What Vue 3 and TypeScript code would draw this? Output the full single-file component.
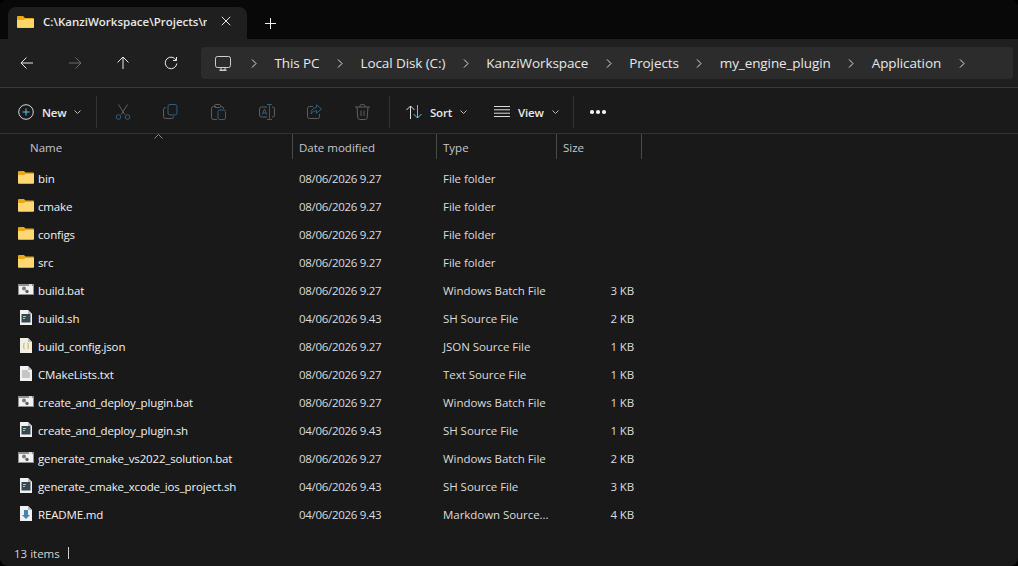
<script setup lang="ts">
type Kind = "folder" | "bat" | "sh" | "json" | "txt" | "md";

interface Row {
  name: string;
  date: string;
  type: string;
  size: string;
  kind: Kind;
}

const crumbs = ["This PC", "Local Disk (C:)", "KanziWorkspace", "Projects", "my_engine_plugin", "Application"];

const rows: Row[] = [
  { name: "bin", date: "08/06/2026 9.27", type: "File folder", size: "", kind: "folder" },
  { name: "cmake", date: "08/06/2026 9.27", type: "File folder", size: "", kind: "folder" },
  { name: "configs", date: "08/06/2026 9.27", type: "File folder", size: "", kind: "folder" },
  { name: "src", date: "08/06/2026 9.27", type: "File folder", size: "", kind: "folder" },
  { name: "build.bat", date: "08/06/2026 9.27", type: "Windows Batch File", size: "3 KB", kind: "bat" },
  { name: "build.sh", date: "04/06/2026 9.43", type: "SH Source File", size: "2 KB", kind: "sh" },
  { name: "build_config.json", date: "08/06/2026 9.27", type: "JSON Source File", size: "1 KB", kind: "json" },
  { name: "CMakeLists.txt", date: "08/06/2026 9.27", type: "Text Source File", size: "1 KB", kind: "txt" },
  { name: "create_and_deploy_plugin.bat", date: "08/06/2026 9.27", type: "Windows Batch File", size: "1 KB", kind: "bat" },
  { name: "create_and_deploy_plugin.sh", date: "04/06/2026 9.43", type: "SH Source File", size: "1 KB", kind: "sh" },
  { name: "generate_cmake_vs2022_solution.bat", date: "08/06/2026 9.27", type: "Windows Batch File", size: "2 KB", kind: "bat" },
  { name: "generate_cmake_xcode_ios_project.sh", date: "04/06/2026 9.43", type: "SH Source File", size: "3 KB", kind: "sh" },
  { name: "README.md", date: "04/06/2026 9.43", type: "Markdown Source...", size: "4 KB", kind: "md" },
];
</script>

<template>
  <div class="window">
    <!-- tab strip -->
    <div class="tabbar">
      <div class="tab">
        <svg class="tab-folder" width="17" height="14" viewBox="0 0 17 14">
          <path d="M0 2a1 1 0 0 1 1-1h5l2 2h8a1 1 0 0 1 1 1v8a1 1 0 0 1-1 1H1a1 1 0 0 1-1-1z" fill="#eaa917" />
          <path d="M0 5h6.500l1.500-1h9v8a1 1 0 0 1-1 .8H1a1 1 0 0 1-1-1z" fill="#fcd768" />
        </svg>
        <span class="tab-title">C:\KanziWorkspace\Projects\my_engine_plugin\Application</span>
        <svg class="tab-close" width="10" height="10" viewBox="0 0 10 10">
          <path d="M.8.8l8.400 8.400M9.200.8L.8 9.200" stroke="#e6e6e6" stroke-width="1" fill="none" />
        </svg>
      </div>
      <svg class="tab-plus" width="11" height="11" viewBox="0 0 11 11">
        <path d="M5.500 0v11M0 5.500h11" stroke="#f0f0f0" stroke-width="1" fill="none" />
      </svg>
    </div>

    <!-- back / forward / up / refresh + breadcrumb -->
    <div class="navbar">
      <div class="nav-buttons">
        <button class="nav-btn">
          <svg width="14" height="14" viewBox="0 0 14 14"><path d="M13 7H1M6.500 1.500L1 7l5.500 5.500" stroke="#e8e8e8" fill="none" /></svg>
        </button>
        <button class="nav-btn">
          <svg width="14" height="14" viewBox="0 0 14 14"><path d="M1 7h12M7.500 1.500L13 7l-5.500 5.500" stroke="#6b6b6b" fill="none" /></svg>
        </button>
        <button class="nav-btn">
          <svg width="14" height="14" viewBox="0 0 14 14"><path d="M7 13V1M1.500 6.500L7 1l5.500 5.500" stroke="#e8e8e8" fill="none" /></svg>
        </button>
        <button class="nav-btn">
          <svg width="14" height="14" viewBox="0 0 14 14"><path d="M12.500 1v3.500H9M12.300 4.500A5.800 5.800 0 1 0 12.800 7.500" stroke="#e8e8e8" fill="none" /></svg>
        </button>
      </div>
      <div class="address">
        <svg class="pc-icon" width="16" height="15" viewBox="0 0 16 15">
          <rect x=".5" y=".5" width="15" height="11" rx="2" stroke="#cfcfcf" fill="none" />
          <path d="M4.500 14.300h7" stroke="#cfcfcf" stroke-width="1.400" fill="none" />
          <path d="M6 12v2M10 12v2" stroke="#cfcfcf" fill="none" />
        </svg>
        <svg class="chev" width="6" height="9" viewBox="0 0 6 9"><path d="M1 .5l4 4-4 4" stroke="#e0e0e0" fill="none" /></svg>
        <template v-for="c in crumbs" :key="c">
          <span class="crumb">{{ c }}</span>
          <svg class="chev" width="6" height="9" viewBox="0 0 6 9"><path d="M1 .5l4 4-4 4" stroke="#e0e0e0" fill="none" /></svg>
        </template>
      </div>
    </div>

    <!-- command bar -->
    <div class="toolbar">
      <div class="tool-text new-btn">
        <svg width="16" height="16" viewBox="0 0 16 16">
          <circle cx="8" cy="8" r="7.300" stroke="#d8d8d8" fill="none" />
          <path d="M8 4.500v7M4.500 8h7" stroke="#5fc1f2" fill="none" />
        </svg>
        <span class="tool-label">New</span>
        <svg class="caret" width="7" height="4" viewBox="0 0 7 4"><path d="M.5.500l3 3 3-3" stroke="#bdbdbd" fill="none" /></svg>
      </div>
      <div class="sep"></div>
      <div class="icon-group">
        <div class="tool-icon">
          <svg width="16" height="16" viewBox="0 0 16 16" fill="none">
            <path d="M3.500 .5l6.300 10M12.500 .5L6.200 10.500" stroke="#5f5f5f" />
            <circle cx="3.500" cy="13" r="2.300" stroke="#2f5f7e" />
            <circle cx="12.500" cy="13" r="2.300" stroke="#2f5f7e" />
          </svg>
        </div>
        <div class="tool-icon">
          <svg width="15" height="15" viewBox="0 0 15 15" fill="none">
            <path d="M3 3.500H2.500a2 2 0 0 0-2 2v7a2 2 0 0 0 2 2h6a2 2 0 0 0 2-2" stroke="#5f5f5f" />
            <rect x="5" y=".5" width="9" height="10.500" rx="2" stroke="#2f5f7e" />
          </svg>
        </div>
        <div class="tool-icon">
          <svg width="15" height="16" viewBox="0 0 15 16" fill="none">
            <path d="M5 2.500H2.500a2 2 0 0 0-2 2v9a2 2 0 0 0 2 2H6M9 2.500h1.500a2 2 0 0 1 2 2V5" stroke="#5f5f5f" />
            <rect x="3.500" y=".5" width="6" height="3" rx="1" stroke="#5f5f5f" />
            <rect x="7" y="6" width="7.500" height="9.500" rx="1.500" stroke="#2f5f7e" />
          </svg>
        </div>
        <div class="tool-icon">
          <svg width="16" height="16" viewBox="0 0 16 16" fill="none">
            <path d="M8 3H2.500a2 2 0 0 0-2 2v6a2 2 0 0 0 2 2H8M13 3h.5a2 2 0 0 1 2 2v6a2 2 0 0 1-2 2H13" stroke="#5f5f5f" />
            <path d="M8 .5h5M8 15.500h5M10.500 .5v15" stroke="#2f5f7e" />
            <path d="M3.300 10.500L5.500 5l2.200 5.500M4 9h3" stroke="#2f5f7e" />
          </svg>
        </div>
        <div class="tool-icon">
          <svg width="15" height="15" viewBox="0 0 15 15" fill="none">
            <path d="M6 2.500H2.500a2 2 0 0 0-2 2v8a2 2 0 0 0 2 2h8a2 2 0 0 0 2-2V10" stroke="#5f5f5f" />
            <path d="M9.500 .8l5 4.200-5 4.200V6.700C7 6.700 5.200 7.800 4 10c0-3.800 2-6.200 5.500-6.500z" stroke="#2f5f7e" />
          </svg>
        </div>
        <div class="tool-icon">
          <svg width="15" height="16" viewBox="0 0 15 16" fill="none" stroke="#5f5f5f">
            <path d="M0 3h15M5 3V2a1.500 1.500 0 0 1 1.500-1.500h2A1.500 1.500 0 0 1 10 2v1M2 3l.8 10.500a2 2 0 0 0 2 2h5.400a2 2 0 0 0 2-2L13 3M6 6.500v5.500M9 6.500v5.500" />
          </svg>
        </div>
      </div>
      <div class="sep"></div>
      <div class="tool-text sort-btn">
        <svg width="16" height="14" viewBox="0 0 16 14" fill="none">
          <path d="M4.500 14V1M.5 5l4-4 4 4" stroke="#e0e0e0" />
          <path d="M11.500 0v13M7.500 9l4 4 4-4" stroke="#5fc1f2" />
        </svg>
        <span class="tool-label">Sort</span>
        <svg class="caret" width="7" height="4" viewBox="0 0 7 4"><path d="M.5.500l3 3 3-3" stroke="#bdbdbd" fill="none" /></svg>
      </div>
      <div class="tool-text view-btn">
        <svg width="16" height="11" viewBox="0 0 16 11" fill="none" stroke="#dcdcdc">
          <path d="M0 .5h16M0 3.800h16M0 7.200h16M0 10.500h16" />
        </svg>
        <span class="tool-label">View</span>
        <svg class="caret" width="7" height="4" viewBox="0 0 7 4"><path d="M.5.500l3 3 3-3" stroke="#bdbdbd" fill="none" /></svg>
      </div>
      <div class="sep"></div>
      <div class="more">
        <i></i><i></i><i></i>
      </div>
    </div>

    <!-- column headers -->
    <div class="header">
      <svg class="sort-arrow" width="9" height="5" viewBox="0 0 9 5"><path d="M.5 4.500l4-4 4 4" stroke="#8a8a8a" fill="none" /></svg>
      <div class="col col-name head">Name</div>
      <div class="col col-date head">Date modified</div>
      <div class="col col-type head">Type</div>
      <div class="col col-size head">Size</div>
    </div>

    <!-- file list -->
    <div class="list">
      <div v-for="r in rows" :key="r.name" class="row">
        <div class="cell-name">
          <span class="file-icon">
            <svg v-if="r.kind === 'folder'" width="16" height="13" viewBox="0 0 16 13">
              <path d="M0 1a1 1 0 0 1 1-1h5l1.500 1.500H15a1 1 0 0 1 1 1V12a1 1 0 0 1-1 1H1a1 1 0 0 1-1-1z" fill="#e9a916" />
              <path d="M0 4h6l1.500-1H16v9H0z" fill="#fdd872" />
            </svg>
            <svg v-else-if="r.kind === 'bat'" width="16" height="11" viewBox="0 0 16 11">
              <rect width="16" height="11" fill="#8f8f8f" />
              <rect x="1" y="2" width="14" height="8" fill="#f2f2f2" />
              <rect x="11" y="0" width="3" height="2" fill="#dcdcdc" />
              <circle cx="6" cy="4.500" r="2" fill="#7a7a7a" />
              <circle cx="9" cy="7.500" r="1.700" fill="#5d5d5d" />
            </svg>
            <svg v-else width="12" height="15" viewBox="0 0 12 15">
              <path d="M0 0h8l4 4v11H0z" :fill="r.kind === 'json' ? '#efefe6' : '#f1f1f1'" />
              <path d="M8 0l4 4H8z" fill="#bdbdbd" />
              <template v-if="r.kind === 'sh'">
                <rect x="1.500" y="4" width="9" height="8.500" fill="#37474f" />
                <path d="M3 6.500h3M3 8.500h2" stroke="#b0bec5" />
              </template>
              <path v-else-if="r.kind === 'json'" d="M4.500 5C3.500 5 3.800 6 3.800 8s-.3 3 .7 3M7.500 5c1 0 .7 1 .7 3s.3 3-.7 3" stroke="#c9b23c" fill="none" />
              <path v-else-if="r.kind === 'txt'" d="M2 5h6M2 7h8M2 9h8M2 11h8" stroke="#9a9a9a" />
              <path v-else d="M4 4h4v5h2l-4 4-4-4h2z" fill="#3f86b5" />
            </svg>
          </span>
          <span class="name">{{ r.name }}</span>
        </div>
        <div class="cell-date">{{ r.date }}</div>
        <div class="cell-type">{{ r.type }}</div>
        <div class="cell-size">{{ r.size }}</div>
      </div>
    </div>

    <!-- status bar -->
    <div class="status">
      <span>13 items</span>
      <span class="status-sep"></span>
    </div>
  </div>
</template>

<style scoped>
.window {
  width: 1018px;
  height: 566px;
  display: flex;
  flex-direction: column;
  overflow: hidden;
  background: #191919;
  border-radius: 8px;
  color: #f2f2f2;
  font-family: "Open Sans", "Noto Sans", sans-serif;
  font-size: 12px;
}

.tabbar {
  height: 39px;
  flex-shrink: 0;
  display: flex;
  align-items: flex-end;
  background: #080808;
  padding-left: 8px;
}

.tab {
  width: 239px;
  height: 32px;
  display: flex;
  align-items: center;
  background: #1f1f1f;
  border-radius: 8px 8px 0 0;
  padding-left: 9px;
  box-sizing: border-box;
}
.tab-folder { flex-shrink: 0; margin-bottom: 3px; }
.tab-title {
  width: 164px;
  margin-left: 9px;
  margin-bottom: 3px;
  overflow: hidden;
  white-space: nowrap;
  font-size: 11.5px;
  font-weight: 600;
  letter-spacing: 0;
  color: #e8e8e8;
}
.tab-close { margin-left: 14px; margin-bottom: 5px; flex-shrink: 0; }
.tab-plus { margin-left: 18px; margin-bottom: 10px; }

.navbar {
  height: 48px;
  flex-shrink: 0;
  display: flex;
  align-items: center;
  background: #1f1f1f;
  border-bottom: 1px solid #3a3a3a;
  padding-left: 3px;
}

.nav-buttons { display: flex; }
.nav-btn {
  width: 48px;
  height: 32px;
  display: flex;
  align-items: center;
  justify-content: center;
  padding: 0;
  border: none;
  background: none;
}

.address {
  width: 812px;
  height: 32px;
  margin-left: 6px;
  display: flex;
  align-items: center;
  gap: 17.5px;
  background: #2c2c2c;
  border-radius: 4px;
  padding-left: 14px;
  box-sizing: border-box;
  font-size: 13.5px;
  letter-spacing: -0.1px;
  color: #e8e8e8;
  white-space: nowrap;
}
.pc-icon { margin-right: 2.500px; }
.chev { flex-shrink: 0; }

.toolbar {
  height: 46px;
  flex-shrink: 0;
  display: flex;
  align-items: center;
  background: #1a1a1a;
  border-bottom: 1px solid #333;
  padding: 2px 0 0 18px;
  box-sizing: border-box;
}

.tool-text {
  display: flex;
  align-items: center;
}
.tool-label {
  font-weight: 600;
  font-size: 11.5px;
  letter-spacing: -0.2px;
  color: #ebebeb;
  margin: 2px 0 0 8px;
}
.caret { margin-left: 8px; flex-shrink: 0; }

.new-btn { width: 78px; }
.sort-btn { width: 88px; margin-left: 16px; }
.view-btn { width: 79px; }

.sep {
  width: 1px;
  height: 32px;
  background: #333;
}

.icon-group {
  display: flex;
  margin: 0 2.500px 0 1.500px;
}
.tool-icon {
  width: 48px;
  display: flex;
  align-items: center;
  justify-content: center;
}

.more {
  display: flex;
  gap: 2.500px;
  margin-left: 16px;
  padding-top: 1px;
}
.more i {
  width: 3.500px;
  height: 3.500px;
  border-radius: 50%;
  background: #f0f0f0;
}

.header {
  position: relative;
  height: 25px;
  flex-shrink: 0;
  display: flex;
  color: #c4c8d0;
}
.sort-arrow { position: absolute; left: 154px; top: 0; }
.col {
  display: flex;
  align-items: center;
  box-sizing: border-box;
  padding-left: 6px;
  padding-top: 2px;
  border-right: 1px solid #4a4a4a;
}
.head { font-size: 11.5px; }
.col-name { width: 293px; padding-left: 30px; }
.col-date { width: 144px; }
.col-type { width: 120px; }
.col-size { width: 85px; }

.list {
  flex: 1;
  padding-top: 5px;
}

.row {
  height: 28px;
  display: flex;
  align-items: center;
  color: #dcdcdc;
  font-size: 11.5px;
}

.cell-name {
  width: 299px;
  display: flex;
  align-items: center;
  padding-left: 18px;
  box-sizing: border-box;
}
.file-icon {
  width: 16px;
  height: 16px;
  display: flex;
  align-items: center;
  justify-content: center;
  margin-bottom: 2px;
}
.name {
  margin-left: 4px;
  color: #f2f2f2;
  letter-spacing: -0.15px;
}
.cell-date { width: 144px; letter-spacing: -0.3px; }
.cell-type { width: 120px; letter-spacing: -0.05px; }
.cell-size { width: 71px; text-align: right; letter-spacing: -0.15px; }

.status {
  height: 26px;
  flex-shrink: 0;
  display: flex;
  align-items: center;
  gap: 8px;
  padding-left: 14px;
  font-size: 11.5px;
  color: #d4d4d4;
}
.status-sep {
  width: 1px;
  height: 12px;
  background: #cfcfcf;
}
</style>

<style>
html,
body {
  background: #000;
}
</style>
